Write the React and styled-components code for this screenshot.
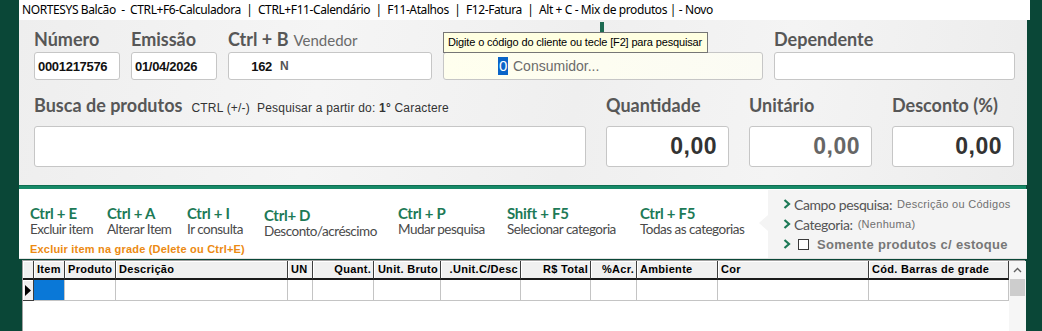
import React from 'react'
import styled, { createGlobalStyle } from 'styled-components'

const GlobalStyle = createGlobalStyle`
  html, body { margin: 0; padding: 0; }
  body { background: #0a4737; overflow: hidden; }
  #root { height: 331px; }
`

const shortcuts = [
   { key: 'Ctrl + E', desc: 'Excluir item', w: 77 },
   { key: 'Ctrl + A', desc: 'Alterar Item', w: 80 },
   { key: 'Ctrl + I', desc: 'Ir consulta', w: 77 },
   { key: 'Ctrl+ D', desc: 'Desconto/acréscimo', w: 134, low: true },
   { key: 'Ctrl + P', desc: 'Mudar pesquisa', w: 109 },
   { key: 'Shift + F5', desc: 'Selecionar categoria', w: 133 },
   { key: 'Ctrl + F5', desc: 'Todas as categorias', w: 120 },
]

const columns = [
   { title: '', w: 11, indicator: true },
   { title: 'Item', w: 31 },
   { title: 'Produto', w: 51 },
   { title: 'Descrição', w: 172 },
   { title: 'UN', w: 25 },
   { title: 'Quant.', w: 61, right: true },
   { title: 'Unit. Bruto', w: 67, right: true },
   { title: '.Unit.C/Desc', w: 80, right: true },
   { title: 'R$ Total', w: 70, right: true },
   { title: '%Acr.', w: 46, right: true },
   { title: 'Ambiente', w: 81 },
   { title: 'Cor', w: 151 },
   { title: 'Cód. Barras de grade', w: 140 },
]

const Chevron = () => (
   <svg width="8" height="10" viewBox="0 0 8 10">
      <path d="M1.5 1 L6 5 L1.5 9" fill="none" stroke="#1d7a57" strokeWidth="2.2" />
   </svg>
)

const App = () => {
   return (
      <>
         <GlobalStyle />
         <Shell>
            <Main>
               <TitleBar>
                  {'NORTESYS Balcão  -  CTRL+F6-Calculadora  |  CTRL+F11-Calendário  |  F11-Atalhos  |  F12-Fatura  |  Alt + C - Mix de produtos | - Novo'}
               </TitleBar>

               <Header>
                  <FieldRow>
                     <Field $w={86}>
                        <Label>Número</Label>
                        <Input>0001217576</Input>
                     </Field>
                     <Field $w={86}>
                        <Label>Emissão</Label>
                        <Input>01/04/2026</Input>
                     </Field>
                     <Field $w={204}>
                        <Label>
                           Ctrl + B <LabelHint>Vendedor</LabelHint>
                        </Label>
                        <Input>
                           <CodePart $w={40}>162</CodePart>
                           <Flag>N</Flag>
                        </Input>
                     </Field>
                     <Field $w={320}>
                        <Label />
                        <Input $yellow>
                           <CodePart $w={61}>
                              <Selected>0</Selected>
                           </CodePart>
                           <Placeholder>Consumidor...</Placeholder>
                        </Input>
                     </Field>
                     <Field $w={241}>
                        <Label>Dependente</Label>
                        <Input />
                     </Field>
                  </FieldRow>

                  <FieldRow $second>
                     <Field $w={552}>
                        <Label $second>
                           Busca de produtos
                           <SearchHint>
                              CTRL (+/-)&nbsp; Pesquisar a partir do: <b>1°</b> Caractere
                           </SearchHint>
                        </Label>
                        <Input $tall />
                     </Field>
                     <Field $w={123}>
                        <Label $second>Quantidade</Label>
                        <Input $tall>
                           <BigValue>0,00</BigValue>
                        </Input>
                     </Field>
                     <Field $w={123}>
                        <Label $second>Unitário</Label>
                        <Input $tall>
                           <BigValue $muted>0,00</BigValue>
                        </Input>
                     </Field>
                     <Field $w={122}>
                        <Label $second>Desconto (%)</Label>
                        <Input $tall>
                           <BigValue>0,00</BigValue>
                        </Input>
                     </Field>
                  </FieldRow>

                  <GreenTick />
                  <Tooltip>Digite o código do cliente ou tecle [F2] para pesquisar</Tooltip>
               </Header>

               <GreenLine />

               <ShortcutBar>
                  <ShortcutBlock>
                     <ShortcutList>
                        {shortcuts.map((s) => (
                           <Shortcut key={s.key} $w={s.w} $low={s.low}>
                              <Key>{s.key}</Key>
                              <KeyDesc>{s.desc}</KeyDesc>
                           </Shortcut>
                        ))}
                     </ShortcutList>
                     <Warning>Excluir item na grade (Delete ou Ctrl+E)</Warning>
                  </ShortcutBlock>

                  <Options>
                     <OptionRow>
                        <Chevron />
                        <OptionLabel>Campo pesquisa:</OptionLabel>
                        <OptionValue>Descrição ou Códigos</OptionValue>
                     </OptionRow>
                     <OptionRow>
                        <Chevron />
                        <OptionLabel>Categoria:</OptionLabel>
                        <OptionValue>(Nenhuma)</OptionValue>
                     </OptionRow>
                     <OptionRow>
                        <Chevron />
                        <CheckBox />
                        <CheckText>Somente produtos c/ estoque</CheckText>
                     </OptionRow>
                  </Options>
               </ShortcutBar>

               <Grid>
                  <GridBody>
                     <HeaderRow>
                        {columns.map((c, i) => (
                           <HeadCell key={i} $w={c.w} $right={c.right}>
                              {c.title}
                           </HeadCell>
                        ))}
                     </HeaderRow>
                     <DataRow>
                        {columns.map((c, i) =>
                           c.indicator ? (
                              <Indicator key={i} $w={c.w}>
                                 <svg width="6" height="11" viewBox="0 0 6 11">
                                    <path d="M0 0 L6 5.5 L0 11 Z" fill="#000" />
                                 </svg>
                              </Indicator>
                           ) : (
                              <Cell key={i} $w={c.w} $active={i === 1} />
                           ),
                        )}
                     </DataRow>
                  </GridBody>
                  <ScrollBar>
                     <ScrollArrow>
                        <svg width="9" height="6" viewBox="0 0 9 6">
                           <path d="M1 5 L4.5 1.5 L8 5" fill="none" stroke="#606060" strokeWidth="1.4" />
                        </svg>
                     </ScrollArrow>
                     <ScrollThumb />
                  </ScrollBar>
               </Grid>
            </Main>
         </Shell>
      </>
   )
}

export default App

// Styled-components:
const Shell = styled.div`
   display: flex;
   height: 331px;
   padding-left: 19px;
   padding-right: 15px;
`

const Main = styled.div`
   flex: 1;
   display: flex;
   flex-direction: column;
   min-width: 0;
`

const TitleBar = styled.div`
   height: 20px;
   width: calc(100% + 3px);
   background: #fff;
   padding-left: 3px;
   box-sizing: border-box;
   font-family: 'Noto Sans', 'Open Sans', sans-serif;
   font-size: 12px;
   line-height: 19px;
   letter-spacing: -0.4px;
   color: #000;
   white-space: pre;
   overflow: hidden;
`

const Header = styled.div`
   position: relative;
   height: 165px;
   box-sizing: border-box;
   padding: 8px 0 0 15px;
   background: linear-gradient(100deg, #eeeeee 0%, #f5f5f5 30%, #efefef 55%, #f4f4f4 75%, #ececec 100%);
`

const FieldRow = styled.div`
   display: flex;
   gap: ${({ $second }) => ($second ? '20px' : '11px')};
   margin-top: ${({ $second }) => ($second ? '14px' : '0')};
`

const Field = styled.div`
   display: flex;
   flex-direction: column;
   width: ${({ $w }) => $w}px;
   flex-shrink: 0;
`

const Label = styled.div`
   height: 22px;
   margin-bottom: ${({ $second }) => ($second ? '10px' : '2px')};
   display: flex;
   align-items: baseline;
   font-family: 'Lato', sans-serif;
   font-weight: 700;
   font-size: 18px;
   line-height: 22px;
   color: #575757;
   white-space: nowrap;
`

const LabelHint = styled.span`
   margin-left: 5px;
   font-weight: 400;
   font-size: 15px;
   color: #6a6a6a;
`

const SearchHint = styled.span`
   margin-left: 9px;
   font-family: 'Liberation Sans', Arial, sans-serif;
   font-weight: 400;
   font-size: 12px;
   letter-spacing: 0.2px;
   color: #333;

   b {
      font-weight: 700;
   }
`

const Input = styled.div`
   height: ${({ $tall }) => ($tall ? '41px' : '28px')};
   box-sizing: border-box;
   display: flex;
   align-items: center;
   padding: 0 3px;
   border: 1px solid #c6c6c6;
   border-radius: 3px;
   background: ${({ $yellow }) => ($yellow ? 'linear-gradient(90deg, #ffffee, #fbfbf4)' : '#fff')};
   font-family: 'Liberation Sans', Arial, sans-serif;
   font-weight: 700;
   font-size: 13px;
   letter-spacing: -0.3px;
   color: #111;
`

const CodePart = styled.span`
   width: ${({ $w }) => $w}px;
   text-align: right;
   flex-shrink: 0;
`

const Selected = styled.span`
   display: inline-block;
   background: #0a64c8;
   color: #fff;
   font-weight: 400;
   font-size: 15px;
   line-height: 18px;
   padding: 0 1px;
`

const Flag = styled.span`
   margin-left: 8px;
   font-size: 12px;
   color: #555;
`

const Placeholder = styled.span`
   margin-left: 5px;
   font-weight: 400;
   font-size: 14px;
   letter-spacing: 0;
   color: #6b6b6b;
`

const BigValue = styled.span`
   margin-left: auto;
   padding-right: 8px;
   font-size: 23px;
   letter-spacing: 0.5px;
   color: ${({ $muted }) => ($muted ? '#666' : '#333')};
`

const GreenTick = styled.div`
   position: absolute;
   left: 581px;
   top: 2px;
   width: 4px;
   height: 10px;
   background: #1e6b52;
`

const Tooltip = styled.div`
   position: absolute;
   left: 424px;
   top: 12px;
   width: 265px;
   height: 21px;
   box-sizing: border-box;
   border: 1px solid #767676;
   background: #ffffe1;
   font-family: 'Liberation Sans', Arial, sans-serif;
   font-size: 11px;
   line-height: 19px;
   padding-left: 4px;
   color: #000;
   white-space: nowrap;
   letter-spacing: -0.15px;
`

const GreenLine = styled.div`
   height: 3px;
   margin-right: 1px;
   background: #178a68;
   border-top: 1px solid #0f6e51;
`

const ShortcutBar = styled.div`
   display: flex;
   height: 69px;
   background: #fff;
   border-bottom: 1px solid #e2e2e2;
`

const ShortcutBlock = styled.div`
   flex: 1;
   padding: 16px 0 0 11px;
`

const ShortcutList = styled.div`
   display: flex;
`

const Shortcut = styled.div`
   width: ${({ $w }) => $w}px;
   flex-shrink: 0;
   display: flex;
   flex-direction: column;
   padding-top: ${({ $low }) => ($low ? '2px' : '0')};
   margin-bottom: ${({ $low }) => ($low ? '-2px' : '0')};
`

const Key = styled.div`
   font-family: 'Lato', sans-serif;
   font-weight: 700;
   font-size: 15px;
   line-height: 16px;
   letter-spacing: -0.3px;
   color: #1d7a57;
   white-space: nowrap;
`

const KeyDesc = styled.div`
   font-family: 'Lato', sans-serif;
   font-size: 13.5px;
   line-height: 16px;
   letter-spacing: -0.5px;
   color: #4a4a4a;
   white-space: nowrap;
`

const Warning = styled.div`
   margin-top: 5px;
   font-family: 'Liberation Sans', Arial, sans-serif;
   font-weight: 700;
   font-size: 11px;
   line-height: 14px;
   letter-spacing: 0.2px;
   color: #ec8a12;
`

const Options = styled.div`
   position: relative;
   width: 244px;
   flex-shrink: 0;
   margin: 1px 0 0;
   padding: 4px 0 0 15px;
   background: #f4f4f4;
   display: flex;
   flex-direction: column;

   &::before {
      content: '';
      position: absolute;
      left: -9px;
      top: 25px;
      border-style: solid;
      border-width: 8px 9px 8px 0;
      border-color: transparent #f4f4f4 transparent transparent;
   }
`

const OptionRow = styled.div`
   height: 20px;
   display: flex;
   align-items: center;
   gap: 3px;
`

const OptionLabel = styled.span`
   font-family: 'Lato', sans-serif;
   font-size: 14px;
   letter-spacing: -0.4px;
   color: #555;
`

const OptionValue = styled.span`
   margin-left: 2px;
   font-family: 'Liberation Sans', Arial, sans-serif;
   font-size: 11px;
   letter-spacing: 0.3px;
   color: #707070;
`

const CheckBox = styled.span`
   width: 11px;
   height: 11px;
   margin-left: 4px;
   box-sizing: border-box;
   border: 1px solid #3a3a3a;
   background: #fff;
`

const CheckText = styled.span`
   margin-left: 5px;
   font-family: 'Liberation Sans', Arial, sans-serif;
   font-weight: 700;
   font-size: 13px;
   letter-spacing: 0.3px;
   color: #777;
`

const Grid = styled.div`
   flex: 1;
   display: flex;
   margin: 1px 2px 0 3px;
   border-top: 1px solid #a0a0a0;
   border-left: 1px solid #a0a0a0;
   background: #fff;
`

const GridBody = styled.div`
   flex: 1;
   display: flex;
   flex-direction: column;
`

const HeaderRow = styled.div`
   display: flex;
   height: 19px;
`

const HeadCell = styled.div`
   width: ${({ $w }) => $w}px;
   flex-shrink: 0;
   box-sizing: border-box;
   background: #f0f0f0;
   border-right: 1px solid #3c3c3c;
   border-bottom: 2px solid #1a1a1a;
   box-shadow: inset 1px 1px 0 #fff;
   padding: 0 2px 0 3px;
   text-align: ${({ $right }) => ($right ? 'right' : 'left')};
   direction: ${({ $right }) => ($right ? 'rtl' : 'ltr')};
   font-family: 'Liberation Sans', Arial, sans-serif;
   font-weight: 700;
   font-size: 11px;
   line-height: 17px;
   letter-spacing: 0.3px;
   color: #000;
   white-space: nowrap;
   overflow: hidden;
   unicode-bidi: plaintext;
`

const DataRow = styled.div`
   display: flex;
   height: 21px;
`

const Cell = styled.div`
   width: ${({ $w }) => $w}px;
   flex-shrink: 0;
   box-sizing: border-box;
   border-right: 1px solid #c4c4c4;
   border-bottom: 1px solid #c4c4c4;
   background: ${({ $active }) => ($active ? '#0a78d7' : '#fff')};
`

const Indicator = styled.div`
   width: ${({ $w }) => $w}px;
   flex-shrink: 0;
   box-sizing: border-box;
   display: flex;
   align-items: center;
   padding-left: 2px;
   background: #f0f0f0;
   border-right: 1px solid #3c3c3c;
   border-bottom: 1px solid #3c3c3c;
   box-shadow: inset 1px 1px 0 #fff;
`

const ScrollBar = styled.div`
   width: 17px;
   flex-shrink: 0;
   display: flex;
   flex-direction: column;
   align-items: center;
   background: #f6f6f6;
`

const ScrollArrow = styled.div`
   height: 18px;
   display: flex;
   align-items: center;
   justify-content: center;
`

const ScrollThumb = styled.div`
   width: 15px;
   height: 17px;
   background: #cdcdcd;
`
